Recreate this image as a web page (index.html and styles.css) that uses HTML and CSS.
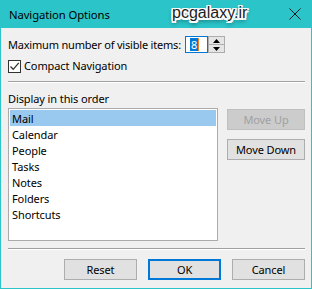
FILE: index.html
```html
<!DOCTYPE html>
<html>
<head>
<meta charset="utf-8">
<link rel="stylesheet" href="styles.css">
</head>
<body>
<div class="window">
  <div class="titlebar">
    <span class="title">Navigation Options</span>
    <span class="watermark">pcgalaxy.ir</span>
    <svg class="close" width="12" height="12" viewBox="0 0 12 12"><path d="M0.5 0.5 L11.5 11.5 M11.5 0.5 L0.5 11.5" stroke="#1a1a1a" stroke-width="1"/></svg>
  </div>
  <div class="content">
    <div class="row-max">
      <span class="label">Maximum number of visible items:</span>
      <div class="spin">
        <div class="spin-input"><span class="sel">8</span><span class="caret"></span></div>
        <div class="spin-btns">
          <div class="spin-btn"><svg width="7" height="4" viewBox="0 0 7 4"><path d="M3.5 0 L7 4 L0 4 Z" fill="#000"/></svg></div>
          <div class="spin-btn"><svg width="7" height="4" viewBox="0 0 7 4"><path d="M0 0 L7 0 L3.5 4 Z" fill="#000"/></svg></div>
        </div>
      </div>
    </div>
    <div class="row-check">
      <span class="checkbox"><svg width="11" height="11" viewBox="0 0 11 11"><path d="M1.5 5.5 L4.2 8.3 L9.8 1.8" fill="none" stroke="#333" stroke-width="1.3"/></svg></span>
      <span class="label">Compact Navigation</span>
    </div>
    <div class="sep"></div>
    <div class="label heading">Display in this order</div>
    <div class="order">
      <ul class="list">
        <li class="selected">Mail</li>
        <li>Calendar</li>
        <li>People</li>
        <li>Tasks</li>
        <li>Notes</li>
        <li>Folders</li>
        <li>Shortcuts</li>
      </ul>
      <div class="side-btns">
        <button class="btn disabled">Move Up</button>
        <button class="btn">Move Down</button>
      </div>
    </div>
    <div class="sep sep-bottom"></div>
    <div class="footer">
      <button class="btn foot">Reset</button>
      <button class="btn foot default">OK</button>
      <button class="btn foot">Cancel</button>
    </div>
  </div>
</div>
</body>
</html>
```
FILE: styles.css
```css
* { box-sizing: border-box; }
html, body { margin: 0; padding: 0; background: #f0f0f0; }
body {
  font-family: "Segoe UI", "Noto Sans", sans-serif;
  font-size: 11px;
  letter-spacing: -0.1px;
  color: #000;
}
.window {
  width: 312px;
  height: 289px;
  background: #f0f0f0;
  border-left: 1px solid #2bc4c8;
  border-right: 1px solid #2bc4c8;
  border-bottom: 1px solid #2bc4c8;
  display: flex;
  flex-direction: column;
}
.titlebar {
  height: 28px;
  margin: 0 -1px;
  background: #2bc4c8;
  display: flex;
  align-items: center;
  padding-left: 9px;
  position: relative;
}
.title {
  font-size: 11.3px;
  color: #000;
  white-space: nowrap;
}
.watermark {
  position: absolute;
  left: 172px;
  top: 4px;
  font-family: "Liberation Sans", Arial, sans-serif;
  font-size: 16px;
  letter-spacing: 0;
  color: #1c1c1c;
  text-shadow:
    -1.5px 0 0 #fff, 1.5px 0 0 #fff, 0 -1.5px 0 #fff, 0 1.5px 0 #fff,
    -1.5px -1.5px 0 #fff, 1.5px 1.5px 0 #fff, -1.5px 1.5px 0 #fff, 1.5px -1.5px 0 #fff,
    0 3px 4px rgba(0,0,0,0.7);
}
.close {
  position: absolute;
  left: 289px;
  top: 8px;
}
.content {
  flex: 1;
  padding: 8px 6px 0 6px;
  display: flex;
  flex-direction: column;
}
.label { line-height: 16px; white-space: nowrap; }
.row-max {
  display: flex;
  align-items: center;
  height: 17px;
  padding-left: 1px;
}
.row-max .label { width: 177px; flex: none; letter-spacing: -0.2px; }
.spin {
  display: flex;
  height: 17px;
}
.spin-input {
  width: 23px;
  height: 17px;
  border: 1px solid #0078d7;
  background: #fff;
  display: flex;
  align-items: center;
  padding-left: 4px;
}
.sel {
  background: #0078d7;
  color: #fff;
  line-height: 13px;
  font-size: 11px;
  padding: 0 1px;
}
.caret {
  width: 1px;
  height: 13px;
  background: #f08020;
}
.spin-btns {
  width: 17px;
  height: 17px;
  border: 1px solid #adadad;
  display: flex;
  flex-direction: column;
  background: #e5e5e5;
}
.spin-btn {
  flex: 1;
  display: flex;
  align-items: center;
  justify-content: center;
}
.spin-btn + .spin-btn { border-top: 1px solid #adadad; }
.row-check {
  display: flex;
  align-items: center;
  margin-top: 6px;
  height: 14px;
  padding-left: 1px;
}
.checkbox {
  width: 13px;
  height: 13px;
  border: 1px solid #333;
  background: #fff;
  display: flex;
  align-items: center;
  justify-content: center;
  margin-right: 3px;
}
.sep {
  height: 2px;
  border-top: 1px solid #a0a0a0;
  border-bottom: 1px solid #fff;
  margin: 8px 0 0 1px;
  width: 297px;
}
.heading {
  margin-top: 8px;
  padding-left: 1px;
}
.order {
  display: flex;
  margin-top: 1px;
  padding-left: 1px;
}
.list {
  list-style: none;
  margin: 0;
  padding: 1px;
  width: 210px;
  height: 133px;
  border: 1px solid #ababab;
  background: #fff;
}
.list li {
  height: 16px;
  line-height: 18px;
  padding-left: 2px;
  white-space: nowrap;
}
.list li.selected { background: #99c9ef; }
.side-btns {
  display: flex;
  flex-direction: column;
  margin-left: 9px;
  margin-top: 1px;
  gap: 9px;
}
.btn {
  font-family: inherit;
  font-size: 11px;
  letter-spacing: -0.1px;
  color: #000;
  background: #e1e1e1;
  border: 1px solid #adadad;
  width: 78px;
  height: 21px;
  padding: 0;
  margin: 0;
  line-height: 17px;
}
.btn.disabled {
  background: #cccccc;
  border-color: #bfbfbf;
  color: #a0a0a0;
}
.sep-bottom { margin-top: 7px; }
.footer {
  display: flex;
  justify-content: flex-end;
  gap: 11px;
  margin-top: 9px;
  width: 298px;
}
.btn.foot { width: 73px; }
.btn.default { border: 2px solid #0078d7; }
```
